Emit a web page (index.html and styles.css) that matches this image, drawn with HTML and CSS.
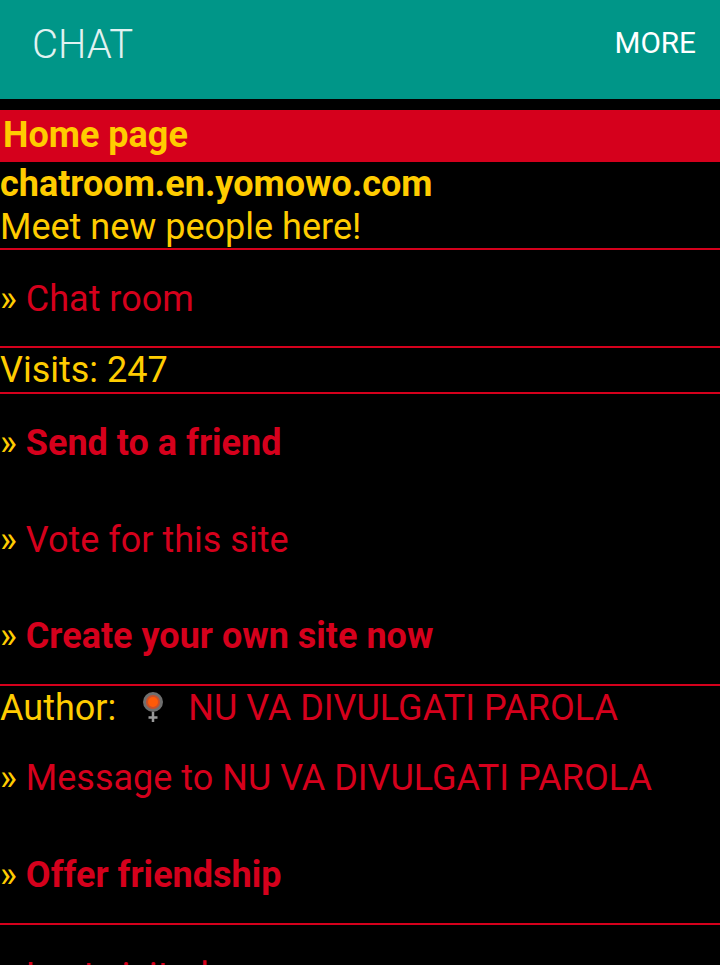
FILE: index.html
```html
<!DOCTYPE html>
<html lang="en">
<head>
  <meta charset="UTF-8" />
  <meta name="viewport" content="width=device-width, initial-scale=1.0"/>
  <title>Chat</title>
  <link rel="stylesheet" href="styles.css">
</head>
<body>
  <div class="screen">
    <header class="topbar">
      <span class="topbar-title">CHAT</span>
      <a class="topbar-more" href="#">MORE</a>
    </header>

    <main class="content">
      <h1 class="page-title">Home page</h1>

      <div class="intro rule">
        <strong>chatroom.en.yomowo.com</strong><br>
        Meet new people here!
      </div>

      <div class="link-row rule"><span class="arrow">»</span> <a href="#">Chat room</a></div>

      <div class="visits rule">Visits: 247</div>

      <div class="link-row"><span class="arrow">»</span> <a class="bold" href="#">Send to a friend</a></div>
      <div class="link-row"><span class="arrow">»</span> <a href="#">Vote for this site</a></div>
      <div class="link-row rule"><span class="arrow">»</span> <a class="bold" href="#">Create your own site now</a></div>

      <div class="author">
        Author:
        <svg class="gender" width="30" height="32" viewBox="0 0 30 32">
          <circle cx="15" cy="10" r="8.5" fill="#c9502a" stroke="#6f6f6f" stroke-width="3"/>
          <circle cx="15" cy="10" r="5" fill="#ff5a08"/>
          <path d="M15 20v10M10.5 25.5h9" stroke="#999" stroke-width="2.5" fill="none"/>
        </svg>
        <a href="#">NU VA DIVULGATI PAROLA</a>
      </div>

      <div class="link-row"><span class="arrow">»</span> <a href="#">Message to NU VA DIVULGATI PAROLA</a></div>
      <div class="link-row rule"><span class="arrow">»</span> <a class="bold" href="#">Offer friendship</a></div>

      <div class="link-row last-row"><span class="arrow">»</span> <a href="#">Last visited</a></div>
    </main>
  </div>
</body>
</html>
```

FILE: styles.css
```css
html, body {
  margin: 0;
  height: 100%;
  background: #fff;
  overflow: hidden;
}

body {
  font-family: 'Roboto', sans-serif;
  font-size: 36px;
  line-height: 42.67px;
  color: #ffcc00;
}

.screen {
  height: 965px;
  overflow: hidden;
  background: #000;
}

.topbar {
  height: 99px;
  background: #009688;
  display: flex;
  justify-content: space-between;
  align-items: center;
  padding: 0 24px 8px 32px;
  box-sizing: border-box;
}

.topbar-title {
  font-size: 40px;
  font-weight: 300;
  color: #e0f2f1;
}

.topbar-more {
  font-size: 29.7px;
  color: #fff;
  text-decoration: none;
  margin-bottom: 4px;
}

.content {
  padding-top: 11px;
}

.page-title {
  margin: 0;
  height: 52px;
  padding-left: 3px;
  background: #d5001c;
  font-size: 36px;
  line-height: 51px;
  font-weight: 700;
}

.rule {
  border-bottom: 2px solid #d5001c;
}

.intro {
  padding-top: 1px;
  height: 84.7px;
}

.intro strong {
  font-weight: 700;
}

a {
  color: #d5001c;
  text-decoration: none;
}

a.bold {
  font-weight: 700;
}

.link-row {
  padding: 28px 0 26px;
}

.last-row {
  padding-top: 30px;
}

.visits {
  height: 42.5px;
  padding-top: 1px;
}

.author {
  display: flex;
  align-items: center;
  box-sizing: border-box;
  height: 43.5px;
  padding-top: 1px;
}

.gender {
  margin: 0 20px 0 22px;
}
```
